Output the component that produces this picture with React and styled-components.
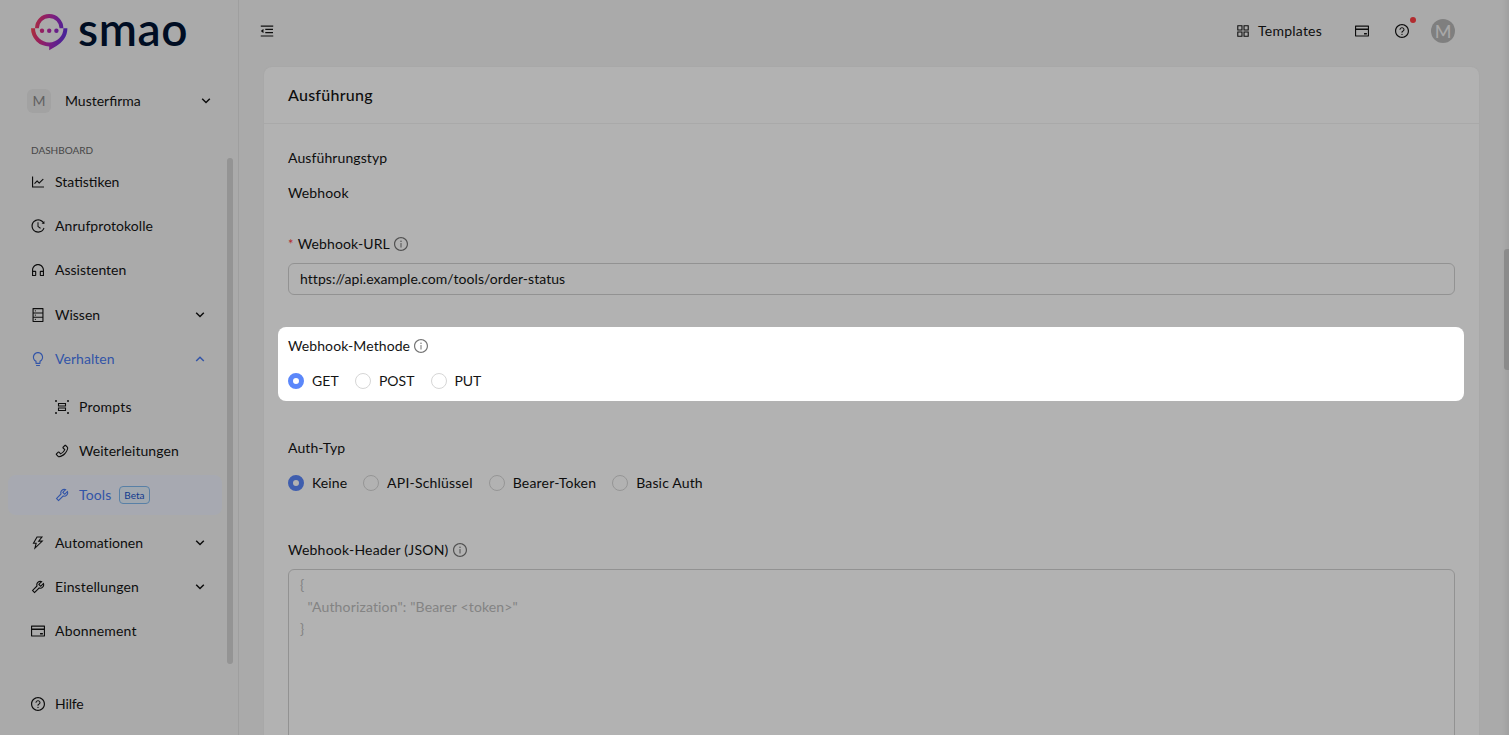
import React from 'react'
import styled, { createGlobalStyle, css } from 'styled-components'
import {
  AiOutlineAppstore,
  AiOutlineBulb,
  AiOutlineCreditCard,
  AiOutlineCustomerService,
  AiOutlineDatabase,
  AiOutlineHistory,
  AiOutlineInfoCircle,
  AiOutlineLineChart,
  AiOutlineMenuFold,
  AiOutlinePhone,
  AiOutlineQuestionCircle,
  AiOutlineThunderbolt,
  AiOutlineTool,
} from 'react-icons/ai'

const menu = [
  { label: 'Statistiken', icon: AiOutlineLineChart },
  { label: 'Anrufprotokolle', icon: AiOutlineHistory, spacing: 0.06 },
  { label: 'Assistenten', icon: AiOutlineCustomerService },
  { label: 'Wissen', icon: AiOutlineDatabase, arrow: true },
  {
    label: 'Verhalten',
    icon: AiOutlineBulb,
    spacing: 0.05,
    arrow: true,
    open: true,
    children: [
      { label: 'Prompts', icon: PromptIcon, spacing: 0.18 },
      { label: 'Weiterleitungen', icon: AiOutlinePhone, spacing: 0.05 },
      { label: 'Tools', icon: AiOutlineTool, spacing: 0.1, beta: true, selected: true },
    ],
  },
  { label: 'Automationen', icon: AiOutlineThunderbolt, spacing: 0.03, arrow: true },
  { label: 'Einstellungen', icon: AiOutlineTool, spacing: 0.13, arrow: true },
  { label: 'Abonnement', icon: AiOutlineCreditCard, spacing: 0.18 },
]

const methods = [
  { label: 'GET', spacing: 0.1, checked: true },
  { label: 'POST', spacing: 0.05 },
  { label: 'PUT', spacing: -0.15 },
]

const authTypes = [
  { label: 'Keine', spacing: 0.08, checked: true },
  { label: 'API-Schlüssel', spacing: 0.2 },
  { label: 'Bearer-Token', spacing: 0.2 },
  { label: 'Basic Auth', spacing: 0.16 },
]

const headerPlaceholder = `{
  "Authorization": "Bearer <token>"
}`

function Logo() {
  return (
    <LogoRow>
      <svg width="38" height="38" viewBox="0 0 38 38" fill="none">
        <defs>
          <linearGradient id="mark" x1="0" y1="14" x2="37" y2="20" gradientUnits="userSpaceOnUse">
            <stop offset="0" stopColor="#f8484f" />
            <stop offset="0.25" stopColor="#dc3080" />
            <stop offset="0.55" stopColor="#b02bb8" />
            <stop offset="1" stopColor="#5b33e0" />
          </linearGradient>
        </defs>
        <path
          d="M4 15.3a14.2 14.2 0 0 1 28.4 0h-3.8a10.4 10.4 0 0 0-20.8 0Z"
          fill="url(#mark)"
        />
        <path
          d="M0 15.3h4a14.2 14.2 0 0 0 28.4 0h4c0 8.5-5.2 14.4-11 17.6l-7.2 4.4v-3.8A18.2 18.2 0 0 1 0 15.3Z"
          fill="url(#mark)"
        />
        <circle cx="11" cy="17.7" r="2.2" fill="url(#mark)" />
        <circle cx="18.2" cy="17.7" r="2.2" fill="url(#mark)" />
        <circle cx="25.4" cy="17.7" r="2.2" fill="url(#mark)" />
      </svg>
      <Wordmark>smao</Wordmark>
    </LogoRow>
  )
}

function PromptIcon() {
  return (
    <svg width="16" height="16" viewBox="0 0 16 16" fill="none">
      <g fill="currentColor">
        <circle cx="2" cy="2" r="1" />
        <circle cx="14" cy="2" r="1" />
        <circle cx="2" cy="14" r="1" />
        <circle cx="14" cy="14" r="1" />
      </g>
      <path
        d="M4.5 4.5h7v2.500h-7zM4.5 9h7v2.500h-7z"
        stroke="currentColor"
        strokeWidth="1.1"
      />
    </svg>
  )
}

function Chevron({ up }) {
  return (
    <svg width="10" height="8" viewBox="0 0 10 8" fill="none">
      <path
        d={up ? 'M1.2 6 5 2.2 8.8 6' : 'M1.2 1.7 5 5.500 8.8 1.7'}
        stroke="currentColor"
        strokeWidth="1.5"
      />
    </svg>
  )
}

function MenuEntry({ item, nested }) {
  const Icon = item.icon
  return (
    <MenuItem $nested={nested} $selected={item.selected} $active={item.open || item.selected}>
      <Icon size={16} />
      <Text $spacing={item.spacing}>{item.label}</Text>
      {item.beta && <BetaTag>Beta</BetaTag>}
      {item.arrow && (
        <Arrow>
          <Chevron up={item.open} />
        </Arrow>
      )}
    </MenuItem>
  )
}

function RadioRow({ options }) {
  return (
    <Radios>
      {options.map((o) => (
        <RadioLabel key={o.label}>
          <RadioDot $checked={o.checked} />
          <Text $spacing={o.spacing}>{o.label}</Text>
        </RadioLabel>
      ))}
    </Radios>
  )
}

export default function App() {
  return (
    <Page>
      <GlobalStyle />
      <Sidebar>
        <Logo />
        <Company>
          <CompanyBadge>M</CompanyBadge>
          <Text>Musterfirma</Text>
          <Arrow>
            <Chevron />
          </Arrow>
        </Company>
        <GroupTitle>DASHBOARD</GroupTitle>
        <MenuScroll>
          <Menu>
            {menu.map((item) => (
              <React.Fragment key={item.label}>
                <MenuEntry item={item} />
                {item.children && (
                  <SubMenu>
                    {item.children.map((child) => (
                      <MenuEntry key={child.label} item={child} nested />
                    ))}
                  </SubMenu>
                )}
              </React.Fragment>
            ))}
          </Menu>
          <MenuThumb />
        </MenuScroll>
        <Footer>
          <MenuEntry item={{ label: 'Hilfe', icon: AiOutlineQuestionCircle, spacing: -0.15 }} />
        </Footer>
      </Sidebar>

      <Main>
        <TopBar>
          <AiOutlineMenuFold size={16} />
          <Actions>
            <Templates>
              <AiOutlineAppstore size={16} />
              <Text $spacing={0.22}>Templates</Text>
            </Templates>
            <AiOutlineCreditCard size={16} />
            <HelpButton>
              <AiOutlineQuestionCircle size={16} />
              <Dot />
            </HelpButton>
            <UserAvatar>M</UserAvatar>
          </Actions>
        </TopBar>

        <Card>
          <CardTitle>Ausführung</CardTitle>
          <CardBody>
            <Field $short>
              <Label $spacing={0.1}>Ausführungstyp</Label>
              <Value>
                <Text $spacing={0.13}>Webhook</Text>
              </Value>
            </Field>
            <Field>
              <Label $spacing={0.12}>
                <Required>*</Required>
                Webhook-URL
                <InfoIcon />
              </Label>
              <Input defaultValue="https://api.example.com/tools/order-status" />
            </Field>
            <Field>
              <Spotlight />
              <Label $spacing={0.09}>
                Webhook-Methode
                <InfoIcon />
              </Label>
              <RadioRow options={methods} />
            </Field>
            <Field>
              <Label $spacing={0.1}>Auth-Typ</Label>
              <RadioRow options={authTypes} />
            </Field>
            <Field>
              <Label $spacing={0.22}>
                Webhook-Header (JSON)
                <InfoIcon />
              </Label>
              <TextArea placeholder={headerPlaceholder} />
            </Field>
          </CardBody>
        </Card>
      </Main>
      <PageScrollbar>
        <PageThumb />
      </PageScrollbar>
    </Page>
  )
}

const GlobalStyle = createGlobalStyle`
  * {
    box-sizing: border-box;
  }
  body {
    margin: 0;
    overflow: hidden;
    background: #f4f4f4;
    color: #141414;
    font-family: Lato, 'Liberation Sans', sans-serif;
    font-size: 14px;
    line-height: 22px;
  }
  svg {
    display: block;
    flex: none;
  }
`

const Page = styled.div`
  position: relative;
  display: flex;
  width: 100%;
  height: 100vh;
  overflow: hidden;
`

const Text = styled.span`
  white-space: nowrap;
  letter-spacing: ${(p) => p.$spacing || 0}px;
`

const Sidebar = styled.aside`
  display: flex;
  flex-direction: column;
  flex: none;
  width: 239px;
  border-right: 1px solid #e4e4e4;
`

const LogoRow = styled.div`
  display: flex;
  align-items: center;
  height: 64px;
  padding-left: 31px;
  gap: 9px;
`

const Wordmark = styled.span`
  color: #001433;
  font-size: 46px;
  font-weight: 600;
  line-height: 64px;
  height: 64px;
  margin-top: -7px;
  letter-spacing: 0.6px;
`

const Company = styled.div`
  display: flex;
  align-items: center;
  height: 40px;
  margin-top: 17px;
  padding: 0 27px;
`

const CompanyBadge = styled.div`
  display: flex;
  align-items: center;
  justify-content: center;
  width: 24px;
  height: 24px;
  margin-right: 14px;
  border-radius: 6px;
  background: #e8e8e8;
  color: #8c8c8c;
`

const Arrow = styled.span`
  margin-left: auto;
`

const GroupTitle = styled.div`
  margin: 18px 0 0 31px;
  color: #666;
  font-size: 10px;
  line-height: 22px;
`

const MenuScroll = styled.div`
  display: flex;
  height: 506px;
  margin-top: -3px;
`

const Menu = styled.nav`
  flex: 1;
  padding: 4.3px 5px 0 8px;
`

const MenuItem = styled.div`
  display: flex;
  align-items: center;
  height: 40px;
  margin-bottom: 4.1px;
  padding-right: 17px;
  padding-left: ${(p) => (p.$nested ? 46 : 22)}px;
  border-radius: 8px;
  gap: 9px;
  color: ${(p) => (p.$active ? '#4a7af0' : 'inherit')};
  ${(p) =>
    p.$selected &&
    css`
      background: #eff3fe;
    `}
`

const SubMenu = styled.div`
  padding: 4px 0;
`

const BetaTag = styled.span`
  padding: 0 4px;
  margin-left: -1px;
  border: 1px solid #7fb8ee;
  border-radius: 4px;
  background: #e6f1fc;
  color: #1653cc;
  font-size: 10px;
  line-height: 16px;
`

const MenuThumb = styled.div`
  width: 6px;
  margin-right: 5px;
  border-radius: 3px;
  background: #d4d4d4;
`

const Footer = styled.div`
  padding: 20px 16px 0 8px;
`

const Main = styled.main`
  display: flex;
  flex-direction: column;
  flex: 1;
  padding: 0 30px 0 25px;
`

const TopBar = styled.header`
  display: flex;
  align-items: center;
  justify-content: space-between;
  flex: none;
  height: 61px;
  padding-right: 24px;
  margin-left: -5px;
`

const Actions = styled.div`
  display: flex;
  align-items: center;
`

const Templates = styled.div`
  display: flex;
  align-items: center;
  gap: 7px;
  margin-right: 32px;
`

const HelpButton = styled.div`
  position: relative;
  margin: 0 21px 0 24px;
`

const Dot = styled.span`
  position: absolute;
  top: -6px;
  right: -6px;
  width: 6px;
  height: 6px;
  border-radius: 50%;
  background: #ff4045;
`

const UserAvatar = styled.div`
  width: 24px;
  height: 24px;
  border-radius: 50%;
  background: #b7b7b7;
  color: #f2f2f2;
  font-size: 18px;
  line-height: 24px;
  text-align: center;
`

const Card = styled.section`
  flex: none;
  height: 800px;
  margin-top: 6px;
  border-radius: 8px;
  background: #fff;
  box-shadow: 0 0 2px rgba(0, 0, 0, 0.06);
`

const CardTitle = styled.div`
  height: 57px;
  padding: 0 24px;
  border-bottom: 1px solid #f2f2f2;
  font-size: 16px;
  font-weight: 500;
  line-height: 56px;
  letter-spacing: 0.25px;
`

const CardBody = styled.div`
  padding: 23px 24px;
`

const Field = styled.div`
  position: relative;
  margin-bottom: ${(p) => (p.$short ? 24 : 40)}px;
`

const Label = styled.div`
  display: flex;
  align-items: center;
  height: 22px;
  margin-bottom: 8px;
  letter-spacing: ${(p) => p.$spacing || 0}px;
`

const Required = styled.span`
  margin-right: 4px;
  color: #ff4045;
  font-size: 13px;
`

const InfoIcon = styled(AiOutlineInfoCircle).attrs({ size: 16 })`
  margin-left: 3px;
  color: #757575;
`

const Value = styled.div`
  height: 32px;
  line-height: 32px;
`

const Input = styled.input`
  display: block;
  width: 100%;
  height: 32px;
  padding: 0 11px 2px;
  border: 1px solid #d2d2d2;
  border-radius: 6px;
  background: transparent;
  color: inherit;
  font: inherit;
  letter-spacing: 0.05px;
`

const Radios = styled.div`
  display: flex;
  align-items: center;
  height: 32px;
  gap: 16px;
`

const RadioLabel = styled.label`
  display: flex;
  align-items: center;
  gap: 8px;
`

const RadioDot = styled.span`
  width: 16px;
  height: 16px;
  border-radius: 50%;
  background: ${(p) => (p.$checked ? '#fff' : 'transparent')};
  border: ${(p) => (p.$checked ? '5px solid #5b87fa' : '1px solid #d6d6d6')};
`

const TextArea = styled.textarea`
  display: block;
  width: 100%;
  height: 220px;
  padding: 4px 11px;
  border: 1px solid #d2d2d2;
  border-radius: 6px;
  background: transparent;
  font: inherit;
  letter-spacing: 0.15px;
  resize: none;
  &::placeholder {
    color: #bcbcbc;
  }
`

/* dims everything except the highlighted field */
const Spotlight = styled.div`
  position: absolute;
  top: -8px;
  left: -10px;
  right: -9px;
  height: 74px;
  border-radius: 8px;
  box-shadow: 0 0 0 2000px rgba(0, 0, 0, 0.3);
  z-index: 5;
  pointer-events: none;
`

const PageScrollbar = styled.div`
  position: absolute;
  top: 0;
  right: 0;
  bottom: 0;
  width: 7px;
  padding: 249px 0 0 2px;
  background: linear-gradient(90deg, #f4f4f4, #e6e6e6);
`

const PageThumb = styled.div`
  height: 121px;
  border-radius: 3px 0 0 3px;
  background: #c8c8c8;
`
